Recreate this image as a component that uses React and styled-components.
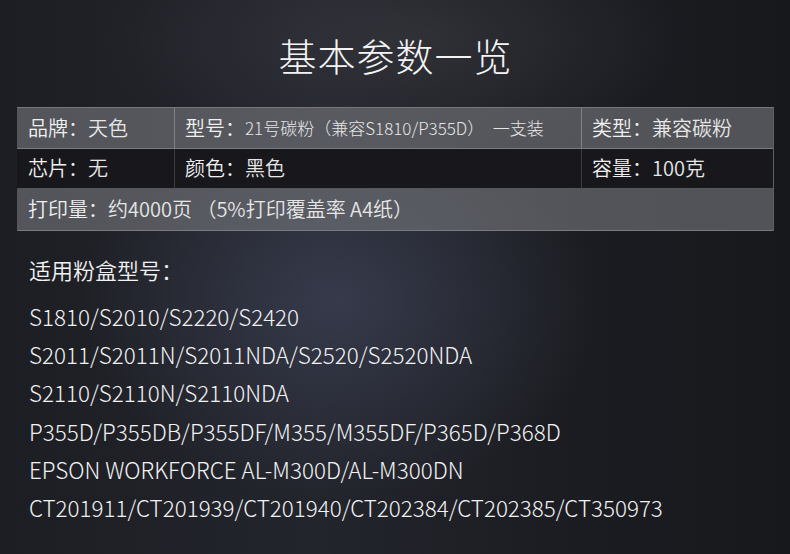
import React from "react";
import styled, { createGlobalStyle } from "styled-components";

const Global = createGlobalStyle`
  html, body { margin: 0; padding: 0; background: #1b1c21; }
  #root { width: 790px; height: 554px; overflow: hidden; }
`;

const Page = styled.div`
  width: 790px;
  height: 554px;
  box-sizing: border-box;
  padding: 0 16px 0 17px;
  display: flex;
  flex-direction: column;
  font-family: "Noto Sans CJK SC", "Noto Sans", sans-serif;
  color: #ececec;
  background:
    radial-gradient(ellipse 260px 200px at 340px 300px, rgba(70,76,100,0.55), rgba(70,76,100,0) 100%),
    radial-gradient(ellipse 300px 120px at 395px 40px, rgba(60,60,66,0.6), rgba(60,60,66,0) 100%),
    linear-gradient(90deg, #1d1e23 0%, #23252d 40%, #1c1d22 70%, #17181c 100%);
`;

const Title = styled.h1`
  margin: 30px 0 0;
  height: 50px;
  line-height: 50px;
  text-align: center;
  font-size: 38px;
  font-weight: 200;
  letter-spacing: 1px;
  color: #f4f4f4;
`;

const Table = styled.div`
  margin-top: 27px;
  display: grid;
  grid-template-columns: 157px 407px 1fr;
  border-top: 1px solid #76777c;
  border-right: 1px solid #5f6065;
`;

const Cell = styled.div`
  height: ${(p) => p.$h}px;
  box-sizing: border-box;
  display: flex;
  align-items: center;
  padding: 0 0 2px 10px;
  font-size: 20px;
  font-weight: 350;
  white-space: nowrap;
  color: #f0f0f0;
  background: ${(p) => (p.$dark ? "#18181c" : "rgba(118,119,125,0.62)")};
  border-bottom: 1px solid ${(p) => (p.$dark ? "#56575c" : "#7a7b80")};
  border-left: 1px solid ${(p) => (p.$first ? "transparent" : p.$dark ? "#3c3d42" : "#808186")};
  grid-column: ${(p) => (p.$span ? "1 / -1" : "auto")};
`;

const Value = styled.span`
  font-size: ${(p) => (p.$small ? 17 : 20)}px;
  font-weight: ${(p) => (p.$small ? 300 : 350)};
  color: #e6e6e6;
`;

const Heading = styled.div`
  margin: 23px 0 0 12px;
  font-size: 22px;
  font-weight: 350;
  line-height: 30px;
  color: #f2f2f2;
`;

const List = styled.div`
  margin: 13px 0 0 12px;
  display: flex;
  flex-direction: column;
`;

const Line = styled.div`
  font-size: 22.4px;
  font-weight: 300;
  line-height: 38.2px;
  color: #f2f2f2;
  white-space: nowrap;
`;

const models = [
  "S1810/S2010/S2220/S2420",
  "S2011/S2011N/S2011NDA/S2520/S2520NDA",
  "S2110/S2110N/S2110NDA",
  "P355D/P355DB/P355DF/M355/M355DF/P365D/P368D",
  "EPSON WORKFORCE AL-M300D/AL-M300DN",
  "CT201911/CT201939/CT201940/CT202384/CT202385/CT350973",
];

export default function App() {
  return (
    <Page>
      <Global />
      <Title>基本参数一览</Title>
      <Table>
        <Cell $h={41} $first>品牌：<Value>天色</Value></Cell>
        <Cell $h={41}>型号：<Value $small>21号碳粉（兼容S1810/P355D）　一支装</Value></Cell>
        <Cell $h={41}>类型：<Value>兼容碳粉</Value></Cell>
        <Cell $h={40} $first $dark>芯片：<Value>无</Value></Cell>
        <Cell $h={40} $dark>颜色：<Value>黑色</Value></Cell>
        <Cell $h={40} $dark>容量：<Value>100克</Value></Cell>
        <Cell $h={42} $first $span>打印量：<Value>约4000页 （5%打印覆盖率 A4纸）</Value></Cell>
      </Table>
      <Heading>适用粉盒型号：</Heading>
      <List>
        {models.map((m) => (
          <Line key={m}>{m}</Line>
        ))}
      </List>
    </Page>
  );
}
